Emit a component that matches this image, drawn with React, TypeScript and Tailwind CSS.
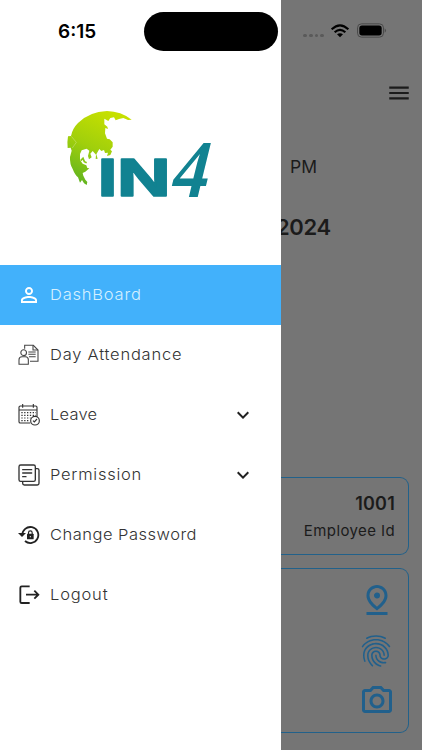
import type { ReactNode } from 'react';
import { MdExpandMore, MdFingerprint, MdMenu, MdOutlinePhotoCamera, MdOutlinePinDrop, MdPersonOutline } from 'react-icons/md';
import clsx from 'clsx';

type MenuItem = {
  label: string;
  icon: ReactNode;
  spacing: string;
  active?: boolean;
  expandable?: boolean;
};

function AttendanceIcon() {
  return (
    <svg viewBox="0 0 66 66" className="w-[22px] h-[22px]" fill="none" stroke="#444" strokeWidth="3.2">
      <path d="M20 14V4H46L60 18V52H36" />
      <path d="M45 4V18H60" />
      <circle cx="17" cy="26" r="8.5" />
      <path d="M3 61V47Q3 38 12 38H22Q31 38 31 47V61Z" />
      <path d="M31 24H53M31 31H53M33 38H53" />
    </svg>
  );
}

function CalendarIcon() {
  return (
    <svg viewBox="0 0 66 66" className="w-[22px] h-[22px]" fill="none" stroke="#333" strokeWidth="3.4">
      <path d="M37 57H7Q3 57 3 53V10Q3 6 7 6H53Q57 6 57 10V38" />
      <path d="M3 18H57M14 0V11M46 0V11" />
      <path d="M10 26H54M10 34H54M10 42H38M10 50H34" strokeDasharray="4 4.5" />
      <circle cx="51" cy="50" r="13" />
      <path d="M45 50L49 54L57 45" />
    </svg>
  );
}

function PermissionIcon() {
  return (
    <svg viewBox="0 0 66 66" className="w-[22px] h-[22px]" fill="none" stroke="#333" strokeWidth="4" strokeLinecap="round">
      <rect x="3" y="3" width="49" height="49" rx="5" />
      <path d="M53 14H58Q63 14 63 19V58Q63 63 58 63H19Q14 63 14 58V53" />
      <path d="M14 17H41M14 27H41M14 38H24" />
    </svg>
  );
}

function PasswordIcon() {
  return (
    <svg viewBox="0 0 66 66" className="w-[22px] h-[22px]" fill="none" stroke="#222" strokeWidth="5.5">
      <path d="M13 34A24 24 0 1 1 21 51" />
      <path d="M0 27L12 39L24 27Z" fill="#222" stroke="none" />
      <rect x="27" y="29" width="20" height="17" rx="2" fill="#222" stroke="none" />
      <path d="M31.500 31V26A5.500 5.500 0 0 1 42.500 26V31" strokeWidth="3.5" />
      <circle cx="37" cy="38" r="1.800" fill="#fff" stroke="none" />
    </svg>
  );
}

function LogoutIcon() {
  return (
    <svg viewBox="0 0 66 66" className="w-[22px] h-[22px]" fill="none" stroke="#222" strokeWidth="5.500">
      <path d="M35 7H11Q7 7 7 11V53Q7 57 11 57H35" />
      <path d="M24 32H60M49 20L61 32L49 44" />
    </svg>
  );
}

const items: MenuItem[] = [
  { label: 'DashBoard', icon: <MdPersonOutline className="w-6 h-6 text-white" />, spacing: 'tracking-[0.72px]', active: true },
  { label: 'Day Attendance', icon: <AttendanceIcon />, spacing: 'tracking-[0.7px]' },
  { label: 'Leave', icon: <CalendarIcon />, spacing: 'tracking-[0.2px]', expandable: true },
  { label: 'Permission', icon: <PermissionIcon />, spacing: 'tracking-[0.68px]', expandable: true },
  { label: 'Change Password', icon: <PasswordIcon />, spacing: 'tracking-[0.45px]' },
  { label: 'Logout', icon: <LogoutIcon />, spacing: 'tracking-[0.75px]' },
];

function Logo() {
  return (
    <svg viewBox="0 0 480 330" className="w-40 h-[110px] overflow-visible">
      <defs>
        <linearGradient id="globe" x1="0.6" y1="0" x2="0.2" y2="1">
          <stop offset="0" stopColor="#c6e000" />
          <stop offset="0.5" stopColor="#a0cf0c" />
          <stop offset="1" stopColor="#5fb321" />
        </linearGradient>
      </defs>
      <path
        fill="url(#globe)"
        d="M215 59Q183 34 141 33Q88 35 54 69Q37 86 33 108L24 109Q21 126 23 144L32 143L35 152L30 171Q29 193 38 207Q45 225 54 232L60 248L66 240L72 250L80 255L82 246L76 239L70 227L68 219L76 215L88 205L82 204L79 196L68 191L60 180V162L65 151L80 146L88 152L84 168L87 178L95 172L91 161L98 153L108 164L107 177L113 176L109 163L118 147L124 153L132 150L135 159L144 158L141 168L151 165L156 154L151 149L158 140V127L149 118L141 116L135 100L136 84L144 87L142 80L133 73L133 56L145 63L151 54L162 52L167 61L177 57L190 54L204 60Z"
      />
      <path d="M34 109L49 127L37 144" stroke="#fff" strokeWidth="1.5" fill="none" opacity="0.5" />
      <path d="M62 182L69 175L73 185L80 188" stroke="#88c718" strokeWidth="5" fill="none" />
      <g fill="#118291">
        <text transform="translate(113 289) scale(1.18 1)" fontFamily="Inter, sans-serif" fontWeight="700" fontSize="152" textLength="185" lengthAdjust="spacingAndGlyphs" stroke="#118291" strokeWidth="5" strokeLinejoin="round">IN</text>
        <text transform="translate(336 290) skewX(-5)" fontFamily="Liberation Serif, serif" fontStyle="italic" fontWeight="700" fontSize="246" textLength="109" lengthAdjust="spacingAndGlyphs">4</text>
      </g>
    </svg>
  );
}

function StatusIcons() {
  return (
    <div className="flex items-center pt-[23px] pl-[22px]">
      <div className="flex gap-[2px] pt-[10px]">
        {[0, 1, 2, 3].map((i) => (
          <span key={i} className="w-[3.800px] h-[3.800px] rounded-full bg-[#5a5a5a]" />
        ))}
      </div>
      <svg viewBox="0 0 54 42" className="w-[18px] h-[14px] ml-[7px]" fill="none" stroke="#000" strokeWidth="6.500">
        <path d="M2 16Q27 -8 52 16" />
        <path d="M11 25Q27 10 43 25" />
        <path d="M18 31Q27 24 36 31L27 40Z" fill="#000" stroke="none" />
      </svg>
      <svg viewBox="0 0 90 44" className="w-[30px] h-[15px] ml-[8px]">
        <rect x="1.500" y="2" width="78" height="40" rx="12" fill="none" stroke="#4a4a4a" strokeWidth="3" />
        <rect x="7" y="7" width="67" height="30" rx="8" />
        <path d="M83 15Q91 22 83 29Z" fill="#4a4a4a" />
      </svg>
    </div>
  );
}

export default function App() {
  return (
    <div className="relative flex w-[422px] h-[750px] overflow-hidden bg-white font-['Inter',sans-serif]">
      <aside className="relative z-10 flex flex-col w-[281px] shrink-0 bg-white">
        <div className="h-[100px] pt-[20px] pl-[58px] text-[19px] leading-[23px] font-semibold text-black">6:15</div>
        <div className="h-[164.500px] pl-[60px]">
          <Logo />
        </div>
        <nav>
          {items.map((item) => (
            <div key={item.label} className={clsx('flex items-center h-[60px] pl-[16.500px]', item.active ? 'bg-[#42b1fb] text-[#d5f0ff]' : 'text-[#333]')}>
              <span className="flex justify-center w-6 mr-[9.500px]">{item.icon}</span>
              <span className={clsx('w-[180.500px] pt-[2px] text-[15px] font-light whitespace-nowrap origin-left scale-x-110', item.spacing)}>{item.label}</span>
              {item.expandable && <MdExpandMore className="w-6 h-6 text-[#222]" />}
            </div>
          ))}
        </nav>
      </aside>

      <main className="flex flex-col w-[141px] h-full bg-[#757575] text-[#1b1b1b]">
        <div className="h-[80px]">
          <StatusIcons />
        </div>
        <div className="flex justify-end pr-[10px]">
          <MdMenu className="w-[26px] h-[26px]" />
        </div>
        <div className="pt-[49px] pl-[9px] text-[17.500px] leading-[24px]">PM</div>
        <div className="pt-[33px] -ml-[5px] text-[22px] leading-[30px] font-semibold tracking-[-0.4px]">2024</div>
        <div className="h-[78px] mt-[235px] mr-[13px] pt-[14px] pr-[13px] border border-l-0 border-[#22618a] rounded-r-[9px] text-right">
          <div className="text-[18px] leading-[24px] font-semibold tracking-[0.2px]">1001</div>
          <div className="pt-[5px] text-[15px] leading-[20px] tracking-[0.4px] whitespace-nowrap">Employee Id</div>
        </div>
        <div className="flex flex-col items-end h-[165px] mt-[13px] mr-[13px] pt-[13px] pr-[13px] border border-l-0 border-[#22618a] rounded-r-[9px] text-[#21608c]">
          <MdOutlinePinDrop className="w-9 h-9" />
          <MdFingerprint className="w-[38px] h-[38px] mt-[13.500px]" />
          <MdOutlinePhotoCamera className="w-9 h-9 mt-[13.500px]" />
        </div>
      </main>

      {/* dynamic island */}
      <div className="absolute z-20 left-[144px] top-[12px] w-[134px] h-[39px] rounded-full bg-black" />
    </div>
  );
}
